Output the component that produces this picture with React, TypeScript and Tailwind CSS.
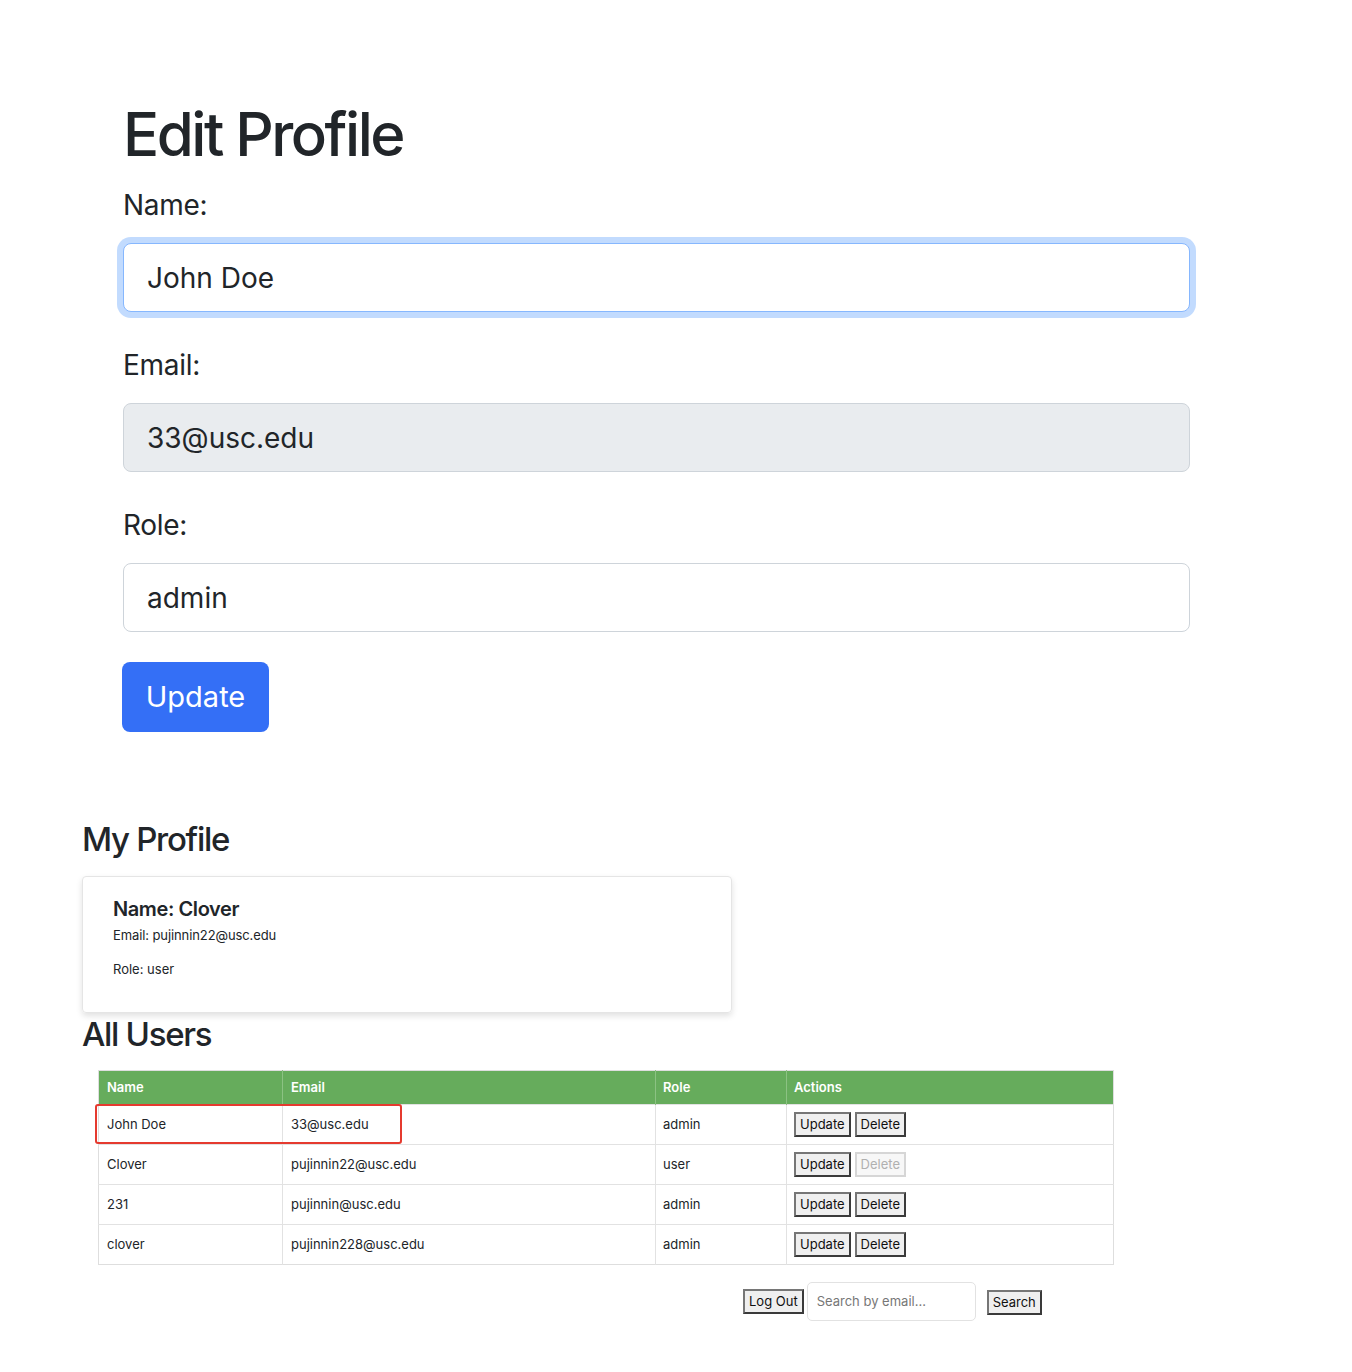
const users = [
  { name: "John Doe", email: "33@usc.edu", role: "admin", canDelete: true },
  { name: "Clover", email: "pujinnin22@usc.edu", role: "user", canDelete: false },
  { name: "231", email: "pujinnin@usc.edu", role: "admin", canDelete: true },
  { name: "clover", email: "pujinnin228@usc.edu", role: "admin", canDelete: true },
];

function Field({ label, value, focused, disabled }: { label: string; value: string; focused?: boolean; disabled?: boolean }) {
  return (
    <div className="mb-[35px]">
      <label className="block text-[28px] leading-[36px] mb-[20px] tracking-[-0.3px]">{label}</label>
      <div
        className={
          "h-[69px] rounded-[8px] border-[1.5px] px-[23px] flex items-center text-[28px] " +
          (focused
            ? "border-[#86b7fe] bg-white shadow-[0_0_0_6px_rgba(13,110,253,0.25)]"
            : disabled
            ? "border-[#ced4da] bg-[#e9ecef]"
            : "border-[#ced4da] bg-white")
        }
      >
        {value}
      </div>
    </div>
  );
}

function SysButton({ children, disabled }: { children: React.ReactNode; disabled?: boolean }) {
  return (
    <button
      className={
        "h-[25px] px-[4px] text-[13px] leading-none border-2 " +
        (disabled
          ? "bg-[#f7f7f7] text-[#b0b0b0] border-[#d6d6d6]"
          : "bg-[#efefef] text-[#111] border-t-[#767676] border-l-[#767676] border-r-[#3a3a3a] border-b-[#3a3a3a]")
      }
    >
      {children}
    </button>
  );
}

export default function App() {
  return (
    <div className="min-h-screen bg-white text-[#212529] font-['Inter',sans-serif]">
      {/* Edit form */}
      <div className="pl-[123px] pt-[98px] w-[1190px]">
        <h1 className="text-[60px] leading-[72px] font-medium tracking-[-2.5px] mb-[17px]">Edit Profile</h1>
        <Field label="Name:" value="John Doe" focused />
        <Field label="Email:" value="33@usc.edu" disabled />
        <Field label="Role:" value="admin" />
        <button className="-mt-[5px] w-[147px] h-[70px] rounded-[8px] bg-[#346ff6] text-white text-[29px] -ml-px">
          Update
        </button>
      </div>

      {/* My profile */}
      <div className="pl-[82px] pt-[87px]">
        <h2 className="text-[33px] leading-[40px] font-medium tracking-[-1.3px] mb-[17px]">My Profile</h2>
        <div className="w-[650px] h-[137px] rounded-[4px] border border-[#e5e5e5] shadow-[0_3px_6px_rgba(0,0,0,0.12)] px-[30px] pt-[18px]">
          <p className="text-[20px] leading-[28px] font-semibold tracking-[-0.4px]">Name: Clover</p>
          <p className="text-[13px] leading-[20px] mt-[2px] tracking-[-0.1px]">Email: pujinnin22@usc.edu</p>
          <p className="text-[13px] leading-[20px] mt-[14px]">Role: user</p>
        </div>

        <h2 className="text-[33px] leading-[40px] font-medium tracking-[-1.3px] mt-[1px]">All Users</h2>

        <div className="relative ml-[16px] mt-[16px] w-[1016px]">
          <table className="w-full border-collapse text-[13px] border border-[#dedede]">
            <thead>
              <tr className="bg-[#66ac5c] text-white h-[34px] text-left">
                <th className="w-[184px] px-[8px] font-semibold border-r border-[#8cc283]">Name</th>
                <th className="w-[373px] px-[8px] font-semibold border-r border-[#8cc283]">Email</th>
                <th className="w-[131px] px-[7px] font-semibold border-r border-[#8cc283]">Role</th>
                <th className="px-[7px] font-semibold">Actions</th>
              </tr>
            </thead>
            <tbody>
              {users.map((u) => (
                <tr key={u.email} className="h-[40px] border-t border-[#e2e2e2]">
                  <td className="px-[8px] border-r border-[#e2e2e2]">{u.name}</td>
                  <td className="px-[8px] border-r border-[#e2e2e2]">{u.email}</td>
                  <td className="px-[7px] border-r border-[#e2e2e2]">{u.role}</td>
                  <td className="px-[7px]">
                    <div className="flex gap-[4px]">
                      <SysButton>Update</SysButton>
                      <SysButton disabled={!u.canDelete}>Delete</SysButton>
                    </div>
                  </td>
                </tr>
              ))}
            </tbody>
          </table>
          {/* highlight annotation */}
          <div className="absolute left-[-3px] top-[34px] w-[307px] h-[40px] rounded-[3px] border-2 border-[#e53a2f] pointer-events-none" />
        </div>

        <div className="flex items-center ml-[661px] mt-[17px]">
          <SysButton>Log Out</SysButton>
          <div className="ml-[3px] w-[169px] h-[39px] rounded-[5px] border border-[#e2e2e2] flex items-center px-[9px] text-[13px] text-[#777]">
            Search by email...
          </div>
          <div className="ml-[11px]">
            <SysButton>Search</SysButton>
          </div>
        </div>
      </div>
    </div>
  );
}
